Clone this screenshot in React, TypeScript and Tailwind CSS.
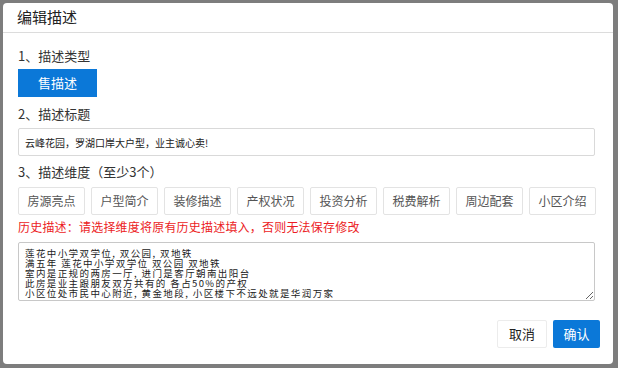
import { useState } from 'react'

const font = { fontFamily: '"Noto Sans CJK SC", "Noto Sans", sans-serif' }

const dims = ['房源亮点', '户型简介', '装修描述', '产权状况', '投资分析', '税费解析', '周边配套', '小区介绍']

const history = [
  '莲花中小学双学位, 双公园, 双地铁',
  '满五年 莲花中小学双学位 双公园 双地铁',
  '室内是正规的两房一厅, 进门是客厅朝南出阳台',
  '此房是业主跟朋友双方共有的 各占50%的产权',
  '小区位处市民中心附近, 黄金地段, 小区楼下不远处就是华润万家',
].join('\n')

export default function App() {
  const [title, setTitle] = useState('云峰花园，罗湖口岸大户型，业主诚心卖!')
  const [desc, setDesc] = useState(history)

  return (
    <div className="h-[368px] w-[618px] overflow-hidden bg-[#7d7d7d]" style={font}>
      <div className="ml-[3px] mt-[3px] flex h-[361px] w-[610px] flex-col rounded-[4px] bg-white">
        <div className="flex h-[30px] items-center border-b border-[#dcdcdc] pl-[14px] text-[15px] text-[#222]">
          编辑描述
        </div>

        <div className="flex flex-col px-[15px]">
          <div className="mt-[13px] text-[13px] leading-[20px] text-[#333]">1、描述类型</div>
          <button
            type="button"
            className="mt-[3px] h-[28px] w-[79px] bg-[#0b78d8] text-[13px] text-white"
          >
            售描述
          </button>

          <div className="mt-[7px] text-[13px] leading-[20px] text-[#333]">2、描述标题</div>
          <input
            value={title}
            onChange={(e) => setTitle(e.target.value)}
            className="mt-[4px] h-[28px] w-[577px] rounded-[2px] border border-[#d9d9d9] px-[6px] text-[10px] text-[#222] outline-none"
          />

          <div className="mt-[6px] text-[13px] leading-[20px] text-[#333]">3、描述维度（至少3个）</div>
          <div className="mt-[5px] flex gap-[6px]">
            {dims.map((d) => (
              <button
                key={d}
                type="button"
                className="h-[28px] w-[67px] rounded-[2px] border border-[#e3e3e3] bg-white text-[12px] text-[#555]"
              >
                {d}
              </button>
            ))}
          </div>

          <div className="mt-[2px] text-[12px] leading-[20px] tracking-[0.2px] text-[#ec1c24]">
            历史描述：请选择维度将原有历史描述填入，否则无法保存修改
          </div>
          <textarea
            value={desc}
            onChange={(e) => setDesc(e.target.value)}
            className="mt-[5px] h-[59px] w-[577px] rounded-[2px] border border-[#c8c8c8] px-[6px] pt-[5px] text-[9.5px] leading-[10px] tracking-[1.4px] text-[#222] outline-none"
          />

          <div className="mt-[19px] flex justify-end gap-[6px]">
            <button
              type="button"
              className="h-[28px] w-[50px] rounded-[2px] border border-[#ececec] bg-white text-[13px] text-[#222]"
            >
              取消
            </button>
            <button
              type="button"
              className="mr-[-2px] h-[28px] w-[47px] rounded-[2px] bg-[#0b78d8] text-[13px] text-white"
            >
              确认
            </button>
          </div>
        </div>
      </div>
    </div>
  )
}
